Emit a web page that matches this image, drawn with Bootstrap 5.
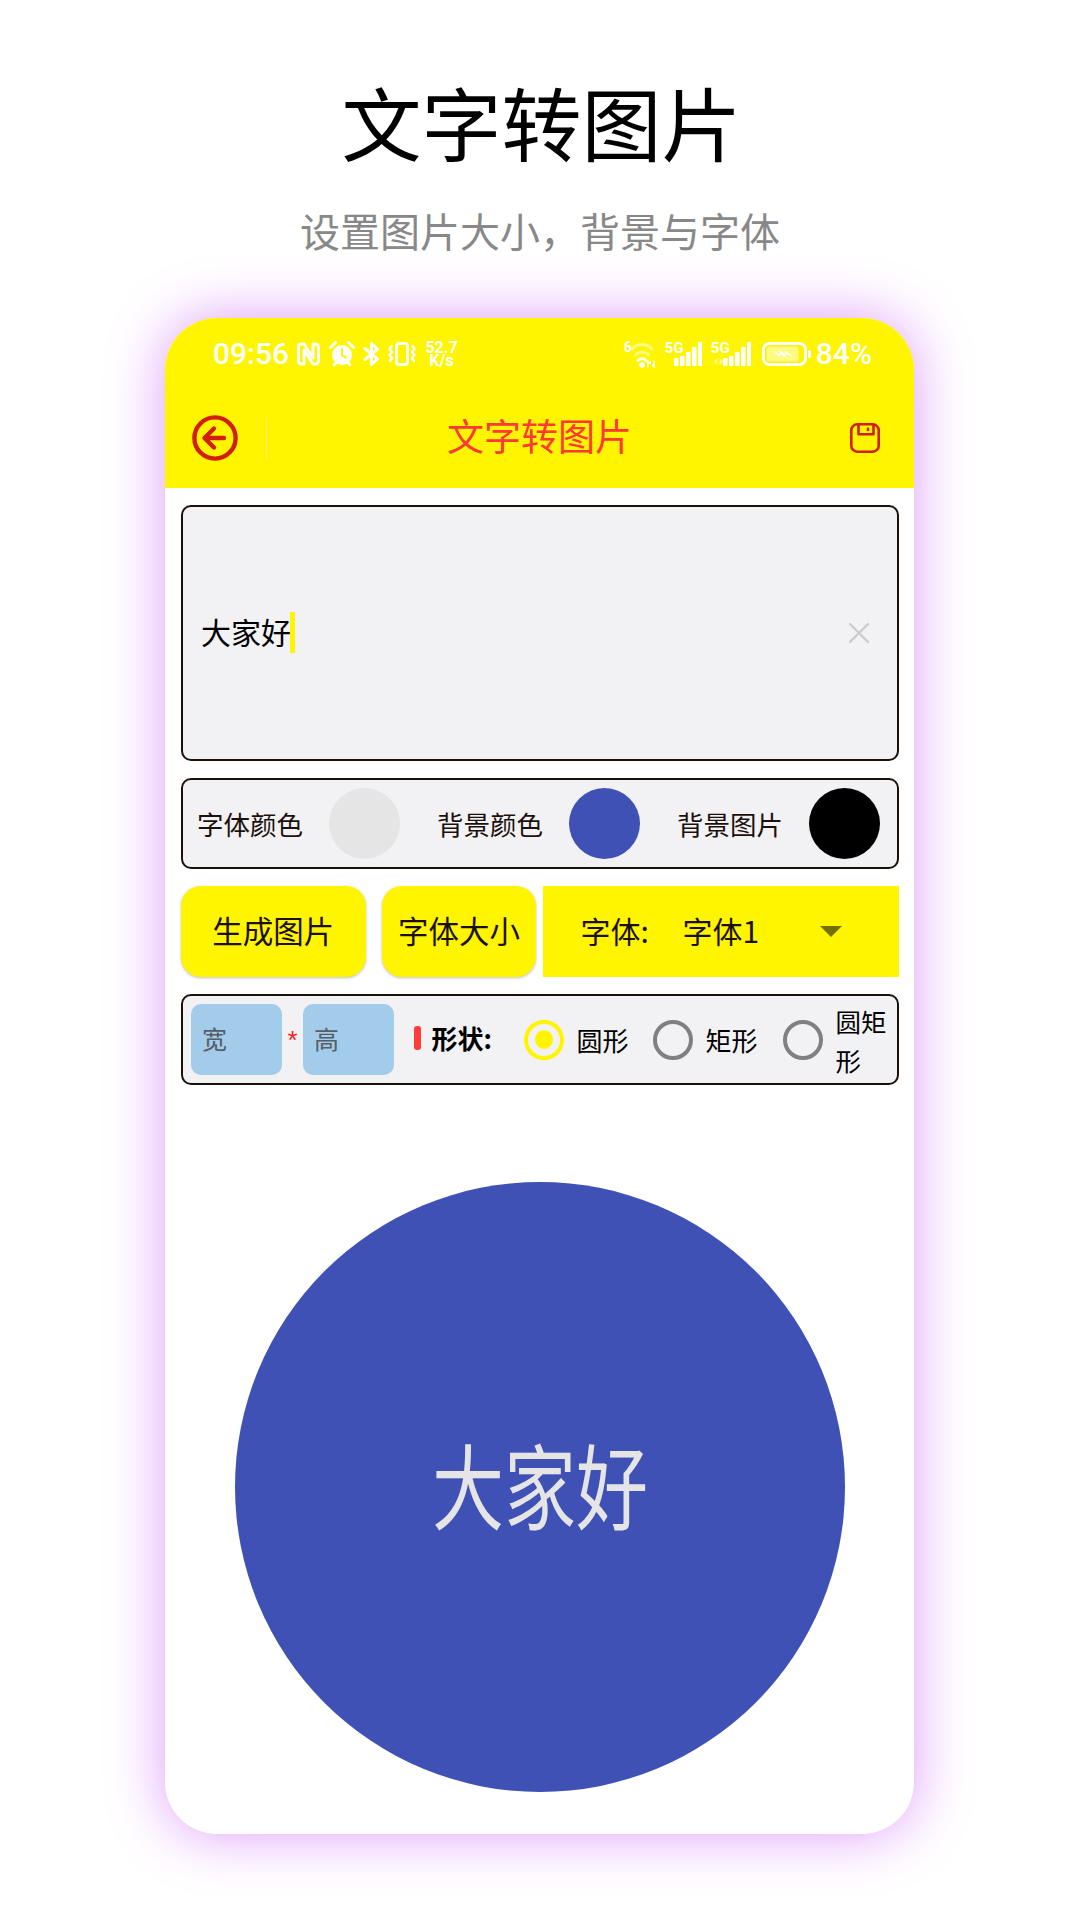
<!doctype html>
<html lang="zh-CN">
<head>
<meta charset="utf-8">
<title>文字转图片</title>
<link href="https://cdn.jsdelivr.net/npm/bootstrap@5.3.0/dist/css/bootstrap.min.css" rel="stylesheet">
<style>
html,body{margin:0;background:#fff}
body{width:1080px;height:1920px;overflow:hidden;font-family:"Noto Sans CJK SC","Liberation Sans",sans-serif;color:#000}
.promo-title{margin:80px 0 0;height:80px;padding-left:3px;font-size:80px;line-height:80px;font-weight:400;text-align:center;color:#000}
.promo-sub{margin:48px 0 0;height:44px;font-size:40px;line-height:44px;color:#888;text-align:center}
.phone{width:749px;height:1516px;margin:66px 0 0 165px;border-radius:52px;background:#fff;box-shadow:0 0 58px rgb(222,155,250);overflow:hidden}
.app-head{background:#fff500;height:170px}
.stat{height:72px;padding:0 42px 0 48px;color:#fff;font-family:Roboto,sans-serif;font-weight:500}
.stat-time{font-size:30px;line-height:36px;width:74px;margin-right:10px;white-space:nowrap}
.stat-pct{font-size:30px;line-height:36px;margin-left:5px;white-space:nowrap}
.stat-speed{font-size:16px;line-height:13px;font-weight:700;text-align:center;width:33px;margin-left:9px}
.stat-five{font-size:15px;line-height:14px;font-weight:700;position:absolute;left:0;top:0}
.stat-six{font-size:14px;line-height:12px;font-weight:700;position:absolute;left:0;top:1px}
.stat-cell{position:relative;display:block}
.bar-side{flex:0 0 102px;height:41px}
.bar-div{border-right:1px solid #fff06a}
.bar-title{font-size:37px;color:#ff3838;text-align:center;line-height:48px;padding-bottom:6px}
.tool{height:96px}
.content{padding:17px 15px 0 16px}
.panel{background:#f2f2f5;border:2px solid #1c100b;border-radius:10px}
.text-panel{height:256px;padding:0 26px 0 18px}
.typed{font-size:30px;line-height:40px;padding-bottom:1px}
.typed-word{margin-top:-2px}
.caret-bar{display:inline-block;width:5px;height:41px;background:#fff500;vertical-align:top;margin-left:-1px;margin-top:-1px}
.clear-x{width:24px;height:24px}
.color-panel{height:91px;margin-top:17px;padding:0 17px 0 14px}
.color-lab{font-size:26.5px;line-height:34px;color:#1c100b;width:105px;margin-right:27px;white-space:nowrap}
.swatch{width:71px;height:71px;border-radius:50%;display:block}
.sw-grey{background:#e5e5e5}.sw-blue{background:#3f51b5}.sw-black{background:#000}
.act-row{margin-top:17px;height:91px}
.btn.act{background:#fff500;border:0;border-radius:20px;color:#1c100b;font-size:30.500px;line-height:40px;padding:0 0 4px;box-shadow:0 1px 3px rgba(0,0,0,.25);height:91px;white-space:nowrap}
.btn.act:hover{background:#fff500;color:#1c100b}
.act-a{width:185px}.act-b{width:155px;margin-left:16px}
.font-pick{width:356px;margin-left:7px;background:#fff500;font-size:30px;line-height:40px;color:#1c100b;padding:0 0 4px 37px}
.font-key{width:102px}
.font-val{width:138px}
.tri{width:0;height:0;border-left:11px solid transparent;border-right:11px solid transparent;border-top:11px solid #736f00;margin-top:4px}
.shape-panel{height:91px;margin-top:17px;padding-left:8px}
.dim-box{width:91px;height:71px;background:#a3cbea;border-radius:10px;font-size:25px;line-height:69px;color:#555e66;padding-left:11px}
.times{width:21px;text-align:center;color:#ff2020;font-size:26px;line-height:30px;font-family:"Liberation Sans",sans-serif}
.tick{width:6.5px;height:24px;background:#ff3b3b;border-radius:3px;margin-left:20px;margin-right:11px;margin-top:-4px}
.shape-lab{font-weight:700;font-size:26px;line-height:34px;width:64px;margin-right:28px;white-space:nowrap;margin-top:-4px}
.ring{width:40px;height:40px;border-radius:50%;border:4px solid #808080;display:flex;align-items:center;justify-content:center;flex:none}
.ring.on{border-color:#fff500}
.ring.on i{display:block;width:18px;height:19px;border-radius:50%;background:#fff500}
.opt-lab{font-size:26px;line-height:39px;margin-left:13px;white-space:nowrap}
.opt-one{margin-right:24px}
.opt-two{margin-right:25px}
.opt-wrap{width:52px;white-space:normal;margin-left:13px;font-size:25.500px}
.big-disc{width:610px;height:610px;border-radius:50%;background:#3f51b5;margin:97px 0 0 54px;color:#e5e5e5;font-size:72px;font-weight:400;line-height:90px;padding-bottom:8px}
.big-text{display:inline-block;transform:scaleY(1.3)}
</style>
</head>
<body>
<h1 class="promo-title">文字转图片</h1>
<p class="promo-sub">设置图片大小，背景与字体</p>

<div class="phone">
  <div class="app-head">
    <div class="stat d-flex align-items-center justify-content-between">
      <div class="d-flex align-items-center">
        <span class="stat-time">09:56</span>
        <svg width="23" height="24" viewBox="0 0 23 24" fill="none" stroke="#fff" stroke-width="3" stroke-linecap="round" stroke-linejoin="round"><path d="M7 2H4.5A3 3 0 0 0 1.5 5v14a3 3 0 0 0 3 3H7V8l9 14h2.5a3 3 0 0 0 3-3V5a3 3 0 0 0-3-3H16v14L7 2"/></svg>
        <svg style="margin-left:9px" width="26" height="26" viewBox="0 0 26 26" fill="none"><circle cx="13" cy="14" r="10" fill="#fff"/><path d="M13 8v6.500l4 2" stroke="#fff500" stroke-width="2" stroke-linecap="round"/><path d="M1.500 6.500 6.500 1.500M24.500 6.500 19.500 1.500M5 24l2.500-3M21 24l-2.500-3" stroke="#fff" stroke-width="2.800" stroke-linecap="round"/></svg>
        <svg style="margin-left:8px" width="17" height="24" viewBox="0 0 17 24" fill="none" stroke="#fff" stroke-width="3" stroke-linecap="round" stroke-linejoin="round"><path d="M2 6.500 14.500 17 8.500 22.500v-21l6 5.500L2 17.500"/></svg>
        <svg style="margin-left:8px" width="28" height="24" viewBox="0 0 28 24" fill="none" stroke="#fff" stroke-width="2.400" stroke-linecap="round" stroke-linejoin="round"><rect x="8.500" y="1.500" width="11" height="21" rx="2.500" stroke-width="2.800"/><path d="M3.500 4 1.500 7l2.500 3-2.500 3 2.500 3-2 3M24.500 4l2 3-2.500 3 2.500 3-2.500 3 2 3"/></svg>
        <span class="stat-speed">52.7<br>K/s</span>
      </div>
      <div class="d-flex align-items-center">
        <span class="stat-cell" style="width:33px;height:28px"><span class="stat-six">6</span>
          <svg class="d-block" width="33" height="28" viewBox="0 0 33 28" fill="none" stroke-linecap="round"><path d="M8 9c5-6 15-6 20 0" stroke="#fffa80" stroke-width="3"/><path d="M11.500 15c3.500-4 9.500-4 13 0" stroke="#fffa80" stroke-width="3"/><path d="M14 20.500c2.200-2.500 5.800-2.500 8 0" stroke="#fff" stroke-width="3"/><circle cx="18" cy="25" r="2.800" fill="#fff"/><path d="M24 21v6M30 21v6" stroke="#fff" stroke-width="1.600"/><path d="M27 20.500l-3 3.500h3zM28 24v3.500l3-3.500z" fill="#fff"/></svg>
        </span>
        <span class="stat-cell" style="width:37px;height:26px;margin-left:8px"><span class="stat-five">5G</span>
          <svg class="d-block" width="37" height="26" viewBox="0 0 37 26" fill="#fff"><rect x="9" y="17" width="4.500" height="8" rx="1"/><rect x="15" y="15" width="4.500" height="10" rx="1"/><rect x="21" y="11" width="4.500" height="14" rx="1"/><rect x="27" y="6" width="4.500" height="19" rx="1"/><rect x="33" y="1" width="4.500" height="24" rx="1"/></svg>
        </span>
        <span class="stat-cell" style="width:40px;height:26px;margin-left:9px"><span class="stat-five">5G</span>
          <svg class="d-block" width="40" height="26" viewBox="0 0 40 26" fill="#fff"><path d="M6.500 17v7l-4-3.500zM8.500 17v7l4-3.500z" fill="#fffa80"/><rect x="12" y="17" width="4.500" height="8" rx="1"/><rect x="18" y="15" width="4.500" height="10" rx="1"/><rect x="24" y="11" width="4.500" height="14" rx="1"/><rect x="30" y="6" width="4.500" height="19" rx="1"/><rect x="36" y="1" width="4.500" height="24" rx="1"/></svg>
        </span>
        <svg style="margin-left:11px" width="49" height="24" viewBox="0 0 49 24" fill="none"><rect x="1.500" y="1.500" width="42" height="21" rx="6" stroke="#fff" stroke-width="3"/><rect x="4.500" y="4.500" width="32" height="15" rx="3" fill="#fffa80"/><path d="M11 8.500l7 3.500-.5-3.500 6 3.500-.5-3.500 8 6-8-2.500.5 3.500-6-3.500.5 3.500z" fill="#fff"/><rect x="46" y="8" width="3" height="8" rx="1.500" fill="#fff"/></svg>
        <span class="stat-pct">84%</span>
      </div>
    </div>
    <div class="tool d-flex align-items-center">
      <div class="bar-side bar-div d-flex align-items-center" style="padding-left:27px">
        <svg width="46" height="46" viewBox="0 0 46 46" fill="none" stroke="#d11f0b" stroke-width="4.400" stroke-linecap="round" stroke-linejoin="round"><circle cx="23" cy="23" r="20.600"/><path d="M32 23H13M22 13.500 12.500 23l9.500 9.500"/></svg>
      </div>
      <div class="bar-title flex-grow-1">文字转图片</div>
      <div class="bar-side d-flex align-items-center justify-content-end" style="padding-right:34px">
        <svg width="30" height="30" viewBox="0 0 30 30" fill="none" stroke="#d11f0b" stroke-width="2.600" stroke-linejoin="round"><rect x="1.300" y="1.300" width="27.400" height="27.400" rx="6"/><path d="M8.500 1.300v10h15v-10"/><path d="M18 4.500v3.500" stroke-width="2.400"/></svg>
      </div>
    </div>
  </div>

  <div class="content">
    <div class="panel text-panel d-flex align-items-center justify-content-between">
      <div class="typed d-flex"><span class="typed-word">大家好</span><span class="caret-bar"></span></div>
      <svg class="clear-x" viewBox="0 0 24 24" fill="none" stroke="#cccccc" stroke-width="2.400" stroke-linecap="round"><path d="M3 3l18 18M21 3 3 21"/></svg>
    </div>

    <div class="panel color-panel d-flex align-items-center justify-content-between">
      <div class="d-flex align-items-center"><span class="color-lab">字体颜色</span><span class="swatch sw-grey"></span></div>
      <div class="d-flex align-items-center"><span class="color-lab">背景颜色</span><span class="swatch sw-blue"></span></div>
      <div class="d-flex align-items-center"><span class="color-lab">背景图片</span><span class="swatch sw-black"></span></div>
    </div>

    <div class="act-row d-flex">
      <button type="button" class="btn act act-a">生成图片</button>
      <button type="button" class="btn act act-b">字体大小</button>
      <div class="font-pick d-flex align-items-center">
        <span class="font-key">字体:</span>
        <span class="font-val">字体1</span>
        <span class="tri"></span>
      </div>
    </div>

    <div class="panel shape-panel d-flex align-items-center">
      <div class="dim-box">宽</div>
      <div class="times">*</div>
      <div class="dim-box">高</div>
      <div class="tick"></div>
      <div class="shape-lab">形状:</div>
      <span class="ring on"><i></i></span><span class="opt-lab opt-one">圆形</span>
      <span class="ring"></span><span class="opt-lab opt-two">矩形</span>
      <span class="ring"></span><span class="opt-lab opt-wrap">圆矩形</span>
    </div>

    <div class="big-disc d-flex align-items-center justify-content-center"><span class="big-text">大家好</span></div>
  </div>
</div>
</body>
</html>
